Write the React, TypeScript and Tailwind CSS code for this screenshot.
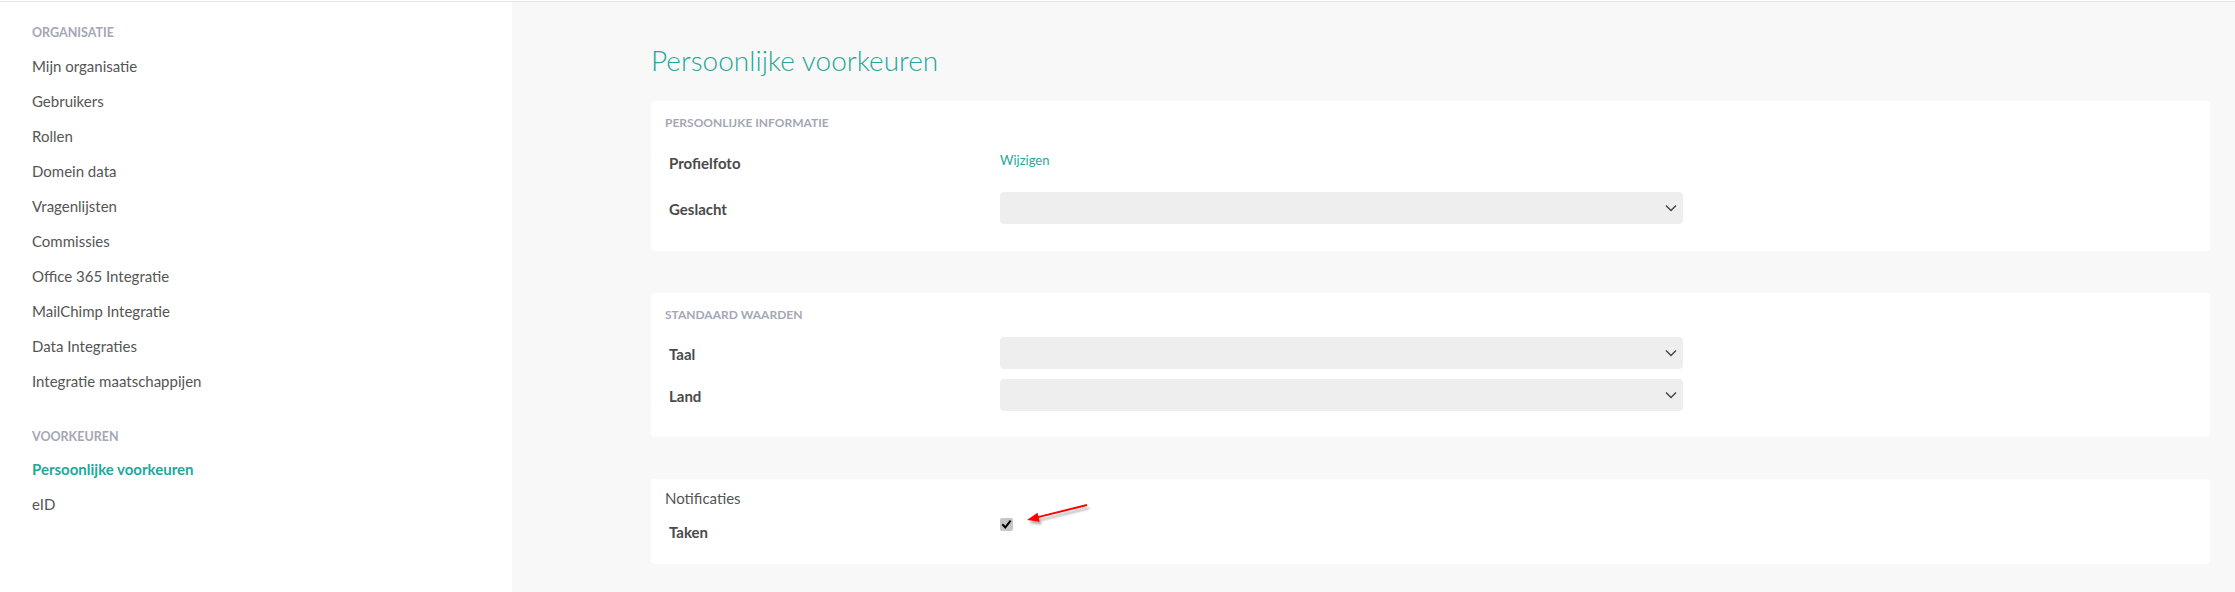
import React from "react";

const orgItems = [
  "Mijn organisatie",
  "Gebruikers",
  "Rollen",
  "Domein data",
  "Vragenlijsten",
  "Commissies",
  "Office 365 Integratie",
  "MailChimp Integratie",
  "Data Integraties",
  "Integratie maatschappijen",
];

function Chevron() {
  return (
    <svg width="12" height="8" viewBox="0 0 12 8" className="shrink-0">
      <polyline points="1,1.5 6,6.5 11,1.5" fill="none" stroke="#444" strokeWidth="1.4" />
    </svg>
  );
}

function Select() {
  return (
    <div className="w-[683px] h-[32px] bg-[#eeeeee] rounded-[4px] flex items-center justify-end pr-[6px]">
      <Chevron />
    </div>
  );
}

function SectionHeader({ children }: { children: React.ReactNode }) {
  return (
    <div className="text-[12px] leading-[16px] font-bold text-[#a4a7b5] uppercase">{children}</div>
  );
}

function Label({ children }: { children: React.ReactNode }) {
  return (
    <div className="w-[335px] pl-[4px] text-[15px] font-bold text-[#4a4a4a] shrink-0">{children}</div>
  );
}

export default function App() {
  return (
    <div className="w-[2235px] h-[592px] font-['Lato',sans-serif] flex flex-col overflow-hidden bg-white">
      <div className="h-[1px] bg-white" />
      <div className="h-[1px] bg-[#e4e4e4]" />
      <div className="flex flex-1">
        {/* Sidebar */}
        <aside className="w-[512px] bg-white pl-[32px] flex flex-col">
          <div className="mt-[23px] text-[12.5px] leading-[16px] font-bold text-[#a4a7b5]">ORGANISATIE</div>
          <div className="mt-[8px] flex flex-col">
            {orgItems.map((t) => (
              <div key={t} className="h-[35px] leading-[35px] text-[15px] text-[#555555]">
                {t}
              </div>
            ))}
          </div>
          <div className="mt-[30px] text-[12.5px] leading-[16px] font-bold text-[#a4a7b5]">VOORKEUREN</div>
          <div className="mt-[7px] flex flex-col">
            <div className="h-[35px] leading-[35px] text-[15px] font-bold text-[#1ea89c]">Persoonlijke voorkeuren</div>
            <div className="h-[35px] leading-[35px] text-[15px] text-[#555555]">eID</div>
          </div>
        </aside>

        {/* Main */}
        <main className="flex-1 bg-[#f8f8f8] pl-[139px] pr-[25px] flex flex-col">
          <h1 className="mt-[40px] h-[36px] leading-[36px] text-[28px] font-light text-[#26a69a]">
            Persoonlijke voorkeuren
          </h1>

          {/* Card 1 */}
          <section className="mt-[23px] bg-white rounded-[4px] pl-[14px] pt-[14px] pb-[27px]">
            <SectionHeader>Persoonlijke informatie</SectionHeader>
            <div className="mt-[15px] h-[32px] flex items-center">
              <Label>
                <span className="relative top-[1px]">Profielfoto</span>
              </Label>
              <div className="text-[13px] text-[#1ea89c] relative -top-[1px]">Wijzigen</div>
            </div>
            <div className="mt-[14px] flex items-center">
              <Label>
                <span className="relative top-[1px]">Geslacht</span>
              </Label>
              <Select />
            </div>
          </section>

          {/* Card 2 */}
          <section className="mt-[42px] bg-white rounded-[4px] pl-[14px] pt-[14px] pb-[26px]">
            <SectionHeader>Standaard waarden</SectionHeader>
            <div className="mt-[14px] flex items-center">
              <Label>
                <span className="relative top-[1px]">Taal</span>
              </Label>
              <Select />
            </div>
            <div className="mt-[10px] flex items-center">
              <Label>
                <span className="relative top-[1px]">Land</span>
              </Label>
              <Select />
            </div>
          </section>

          {/* Card 3 */}
          <section className="relative mt-[42px] bg-white rounded-[4px] pl-[14px] pt-[9px] pb-[22px]">
            <div className="text-[15px] leading-[20px] text-[#555555]">Notificaties</div>
            <div className="mt-[7px] flex items-start">
              <div className="pt-[7px] leading-[20px]">
                <Label>Taken</Label>
              </div>
              <div className="mt-[3px] w-[13px] h-[13px] bg-[#c6c6c6] rounded-[2px] flex items-center justify-center">
                <svg width="11" height="11" viewBox="0 0 11 11">
                  <path d="M2 6 L4.3 8.4 L9 2.5" fill="none" stroke="#000" strokeWidth="2" strokeLinecap="square" />
                </svg>
              </div>
            </div>
            <svg
              className="absolute left-[371px] top-[20px]"
              width="76"
              height="32"
              viewBox="0 0 76 32"
            >
              <defs>
                <filter id="sh" x="-20%" y="-50%" width="140%" height="200%">
                  <feGaussianBlur stdDeviation="1.2" />
                </filter>
              </defs>
              <g transform="translate(2,3)" opacity="0.45" filter="url(#sh)">
                <line x1="65" y1="6" x2="15" y2="18.4" stroke="#555" strokeWidth="2" />
                <polygon points="5,21 17.7,22.8 15.5,13.8" fill="#555" />
              </g>
              <line x1="65" y1="6" x2="15" y2="18.4" stroke="#ff0000" strokeWidth="2" />
              <polygon points="5,21 17.7,22.8 15.5,13.8" fill="#ff0000" />
            </svg>
          </section>
        </main>
      </div>
    </div>
  );
}
